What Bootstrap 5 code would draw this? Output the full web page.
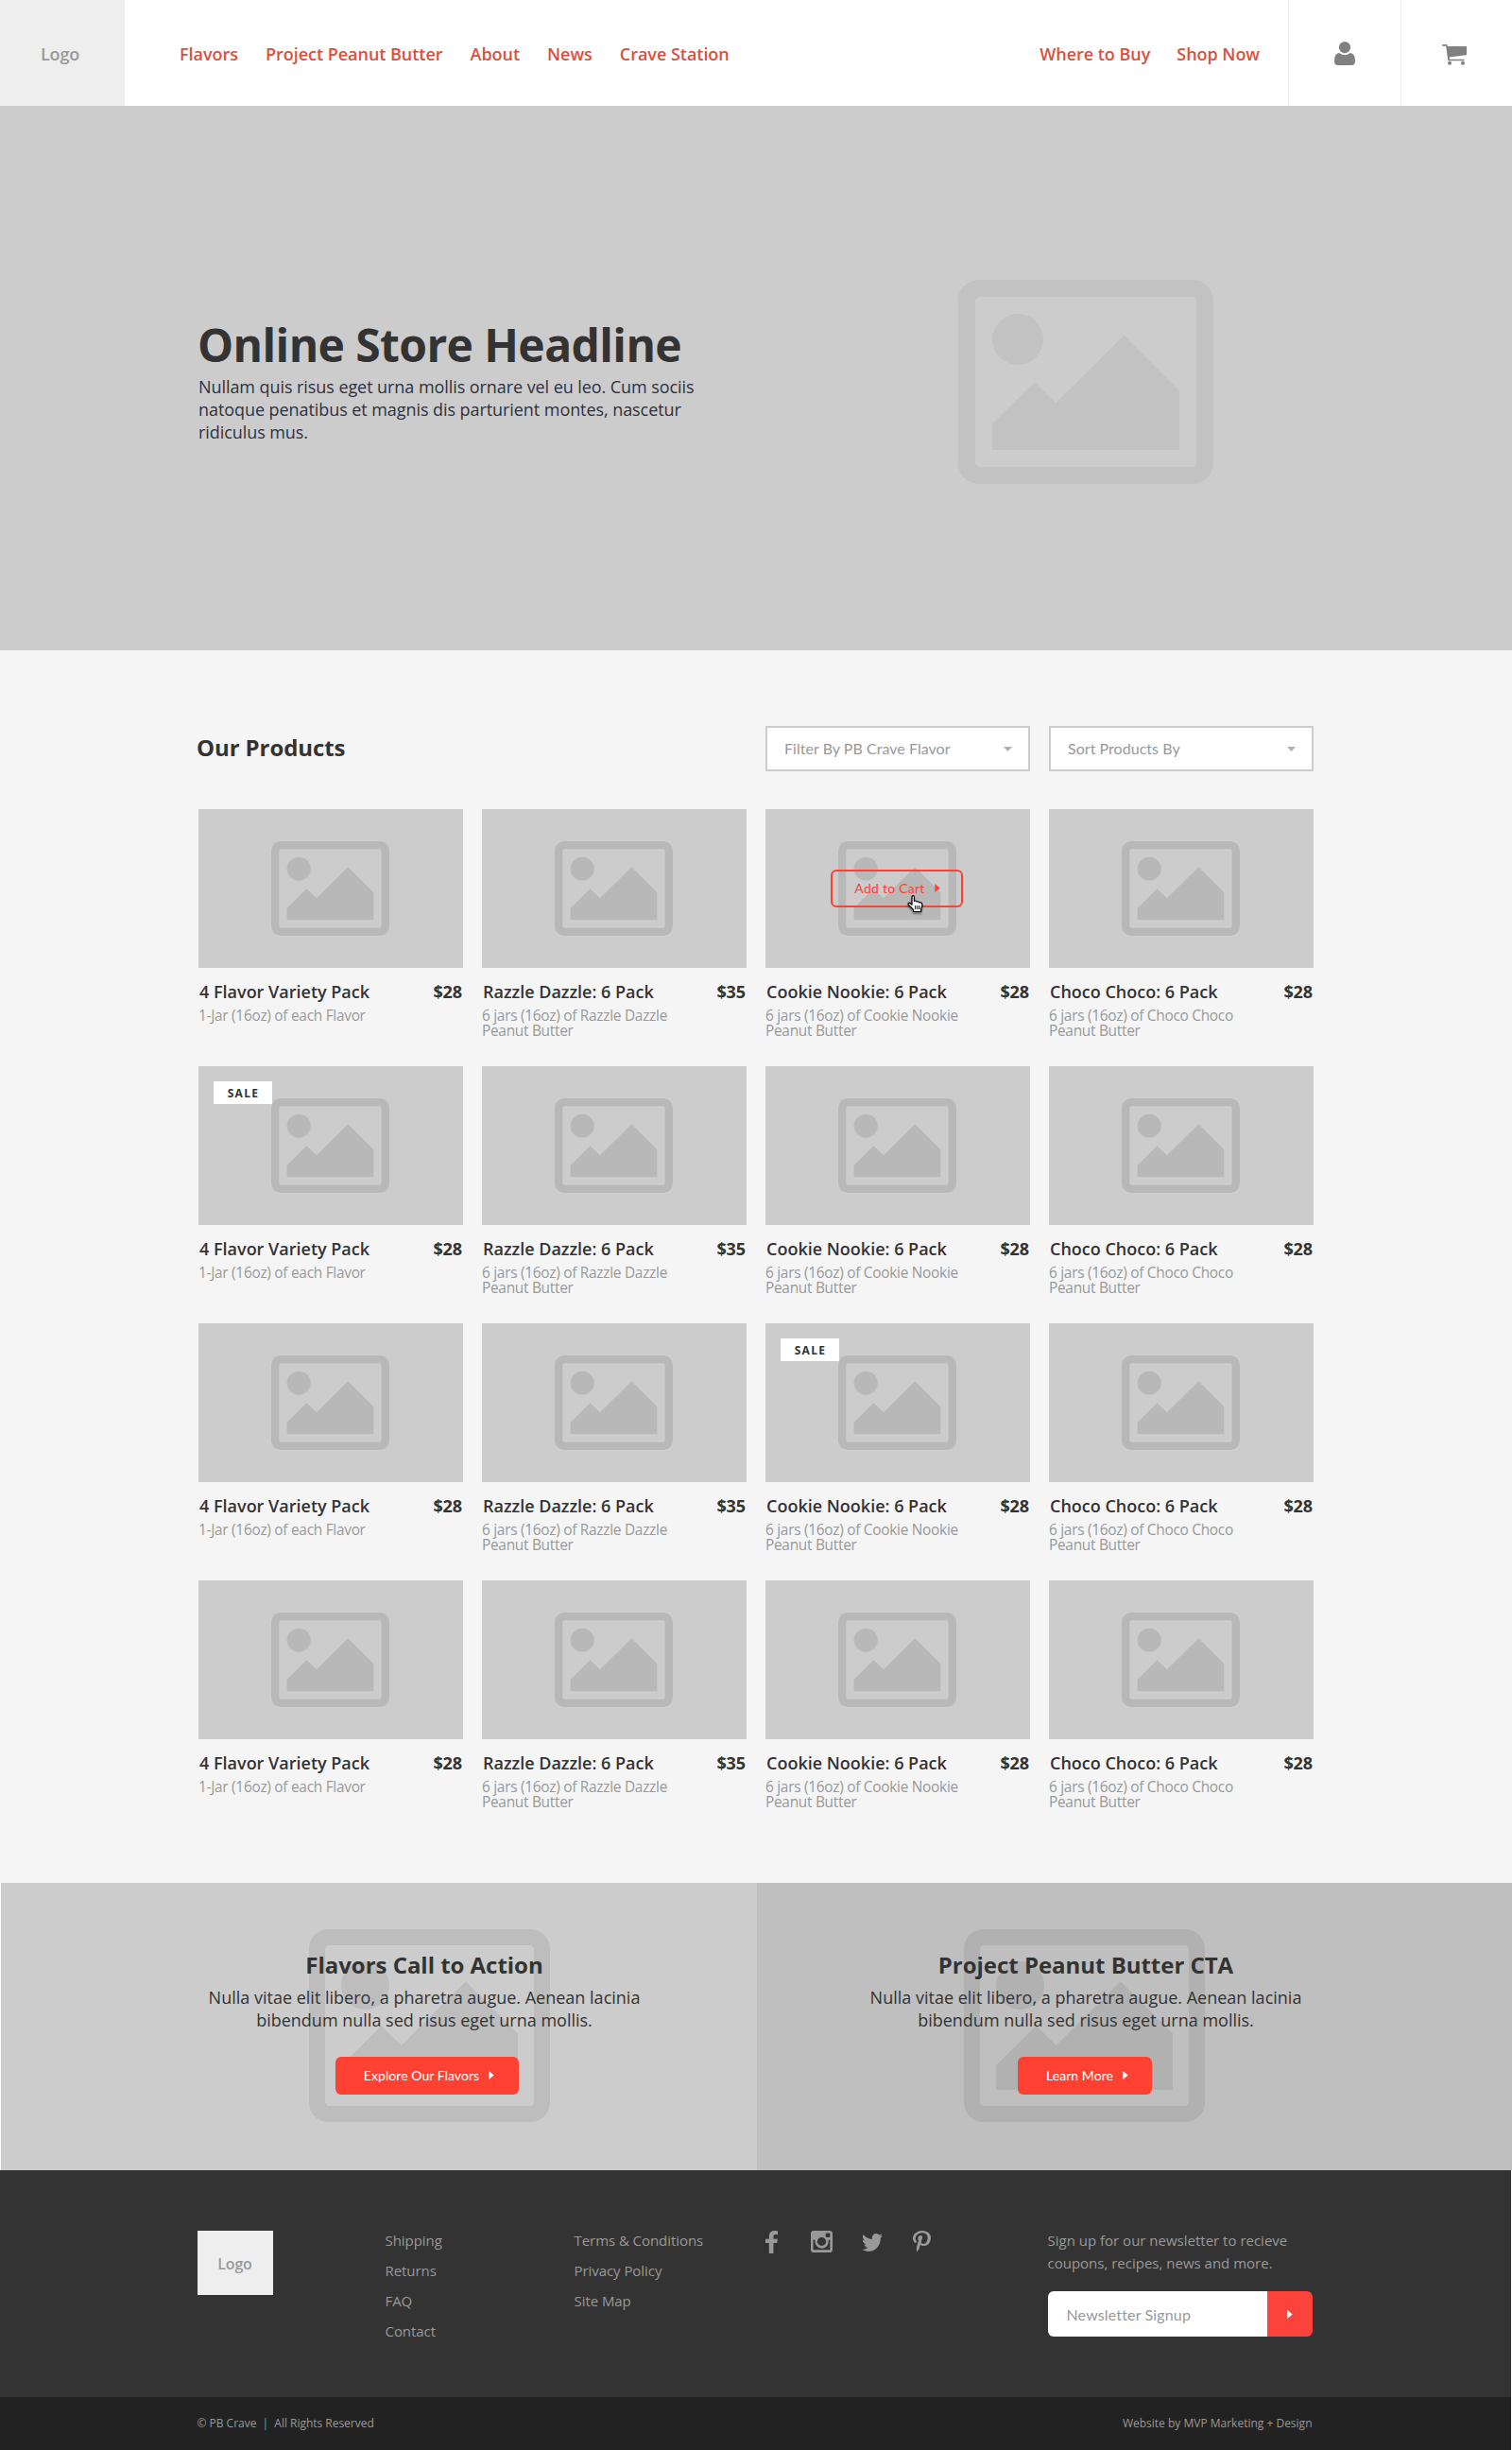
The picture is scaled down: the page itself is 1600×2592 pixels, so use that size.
<!DOCTYPE html>
<html lang="en">
<head>
<meta charset="utf-8">
<meta name="viewport" content="width=device-width, initial-scale=1">
<title>PB Crave – Online Store</title>
<link href="https://cdn.jsdelivr.net/npm/bootstrap@5.3.0/dist/css/bootstrap.min.css" rel="stylesheet">
<style>
  body { font-family: "Open Sans", sans-serif; background: #fff; color: #333; font-size: 18px; line-height: 24px; }
  .humanist { font-family: Lato, sans-serif; }
  .wrap { width: 1180px; margin: 0 auto; }
  svg { display: block; flex: none; }

  /* Header */
  .site-nav { height: 112px; padding: 0; font-weight: 600; }
  .site-logo { width: 132px; background: #eee; color: #999; font-weight: 600; letter-spacing: -.2px; padding: 2px 5px 0 0; }
  .site-nav .nav-link { color: #dc4f40; padding: 2px 0 0; letter-spacing: -.03px; }
  .nav-main { gap: 29px; margin-left: 58px; }
  .nav-shop { gap: 28px; margin-right: 30px; }
  .nav-tool { width: 119px; border-left: 1px solid #eee; }
  .nav-tool + .nav-tool { width: 118px; padding-right: 5px; }

  /* Hero */
  .hero { height: 576px; background: #ccc; }
  .hero-copy { width: 540px; padding-top: 229px; }
  .hero-copy h1 { font-size: 48px; line-height: 48px; font-weight: 700; letter-spacing: -.6px; margin: 0 0 8px -1px; }
  .hero-copy p { color: #2f3140; letter-spacing: -.07px; margin: 0; }
  .hero-art { margin: 184px 106px 0 0; color: #c2c2c2; }

  /* Products */
  .products { background: #f5f5f5; padding: 80px 0 48px; }
  .products-head { height: 48px; margin-bottom: 40px; gap: 20px; }
  .products-head h2 { font-size: 24px; font-weight: 700; letter-spacing: -.1px; margin: 0 auto 2px -2px; }
  .picker { width: 280px; height: 48px; background: #fff; border: 2px solid #ccc; border-radius: 0; padding: 0 17px 0 18px; color: #999; font-size: 16px; letter-spacing: .04px; }
  .product-grid { --bs-gutter-x: 20px; }
  .product { height: 272px; }
  .thumb { height: 168px; background: #ccc; color: #b8b8b8; }
  .thumb-art { margin-right: 1px; }
  .product h3 { font-size: 18px; line-height: 24px; font-weight: 600; margin: 0; }
  .price { font-weight: 700; letter-spacing: -.1px; }
  .product-line { margin: 13px 1px 6px; }
  .product p { font-size: 15.4px; line-height: 16px; color: #999; width: 216px; letter-spacing: -.27px; margin: 0; }
  .sale-flag { position: absolute; left: 16px; top: 16px; width: 62px; height: 24px; background: #fff; color: #333; font-size: 12px; font-weight: 700; letter-spacing: 1.3px; line-height: 25px; padding-left: 1px; text-align: center; }
  .add-btn { position: absolute; left: 69px; top: 64px; width: 140px; height: 40px; border: 2px solid #ff4133; border-radius: 6px; color: #ff4133; font-size: 14px; letter-spacing: .25px; gap: 10px; padding: 0 0 1px 1px; }
  .pointer-hand { position: absolute; left: 150px; top: 91px; filter: drop-shadow(0 2px 1px rgba(0,0,0,.4)); }

  /* Calls to action */
  .cta { height: 304px; padding-top: 71px; text-align: center; }
  .cta-flavors { width: 800px; margin-left: 1px; background: #ccc; color: #bdbdbd; padding-right: 0; padding-left: 96px; }
  .cta-project { width: 799px; background: #bfbfbf; color: #b1b1b1; padding-right: 103px; }
  .cta h2 { color: #333; font-size: 24px; line-height: 32px; font-weight: 700; margin: 0 0 6px; letter-spacing: -.03px; position: relative; }
  .cta p { color: #333; width: 470px; margin: 0 auto 27px; position: relative; }
  .cta-art { position: absolute; top: 49px; }
  .cta-flavors .cta-art { left: 326px; }
  .cta-project .cta-art { left: 219px; }
  .cta .btn { height: 40px; padding: 0 0 1px; border: 0; border-radius: 6px; background: #ff4133; color: #fff; font-size: 14px; gap: 10px; position: relative; letter-spacing: .06px; }
  .cta-flavors .btn { width: 194px; margin-left: 6px; padding-left: 4px; }
  .cta-project .btn { width: 142px; margin-right: 2px; padding-left: 5px; }

  /* Footer */
  .site-footer { width: 1599px; height: 240px; background: #333; color: #999; font-size: 15px; padding-top: 58px; }
  .footer-logo { width: 80px; height: 68px; background: #eee; font-weight: 600; font-size: 16px; letter-spacing: -.2px; margin: 6px 119px 0 -1px; padding-top: 1px; }
  .footer-links { line-height: 32px; letter-spacing: -.06px; }
  .links-help { width: 200px; }
  .links-legal { width: 202px; }
  .social { margin-top: 6px; }
  .social .ico-instagram { margin-left: 35px; }
  .social .ico-twitter { margin: 3px 32px 0 31px; }
  .signup { width: 280px; margin: 4px 1px 0 auto; }
  .signup p { margin-bottom: 18px; }
  .signup .form-control { height: 48px; border: 0; border-radius: 6px 0 0 6px; padding: 0 20px; font-size: 16px; letter-spacing: .15px; }
  .signup .form-control::placeholder { color: #999; opacity: 1; }
  .signup .btn { width: 48px; background: #fb423b; color: #fff; border: 0; border-radius: 0 6px 6px 0; padding: 0; }
  .legal { width: 1599px; height: 56px; background: #222; color: #999; font-size: 12px; }
  .legal .wrap { padding-right: 1px; }
  .legal-owner { margin-left: -1px; letter-spacing: -.02px; }
</style>
<script src="https://cdn.jsdelivr.net/npm/bootstrap@5.3.0/dist/js/bootstrap.bundle.min.js"></script>
</head>
<body>

<svg width="0" height="0" class="position-absolute" aria-hidden="true">
  <symbol id="picture" viewBox="0 0 270 216">
    <path fill="currentColor" fill-rule="evenodd" d="M22 0H248a22 22 0 0 1 22 22V194a22 22 0 0 1-22 22H22a22 22 0 0 1-22-22V22A22 22 0 0 1 22 0ZM22.500 18a4.500 4.500 0 0 0-4.500 4.500V193.500a4.500 4.500 0 0 0 4.500 4.500H247.500a4.500 4.500 0 0 0 4.500-4.500V22.500a4.500 4.500 0 0 0-4.500-4.500Z"/>
    <circle fill="currentColor" cx="63" cy="63" r="27"/>
    <path fill="currentColor" d="M36 152.700 81 108.300 103.500 130.300 175.500 58.600 234 117V180H36Z"/>
  </symbol>
  <symbol id="arrow-right" viewBox="0 0 6 9"><path fill="currentColor" d="M.3 0 5.700 4.500 .3 9Z"/></symbol>
  <symbol id="arrow-down" viewBox="0 0 9 5"><path fill="#b0b0b0" d="M0 0H9L4.500 5Z"/></symbol>
</svg>

<nav class="site-nav navbar-expand d-flex bg-white">
  <a class="site-logo d-flex align-items-center justify-content-center text-decoration-none" href="#">Logo</a>
  <ul class="navbar-nav nav-main align-items-center">
    <li class="nav-item"><a class="nav-link" href="#">Flavors</a></li>
    <li class="nav-item"><a class="nav-link" href="#">Project Peanut Butter</a></li>
    <li class="nav-item"><a class="nav-link" href="#">About</a></li>
    <li class="nav-item"><a class="nav-link" href="#">News</a></li>
    <li class="nav-item"><a class="nav-link" href="#">Crave Station</a></li>
  </ul>
  <ul class="navbar-nav nav-shop align-items-center ms-auto">
    <li class="nav-item"><a class="nav-link" href="#">Where to Buy</a></li>
    <li class="nav-item"><a class="nav-link" href="#">Shop Now</a></li>
  </ul>
  <a class="nav-tool d-flex align-items-center justify-content-center" href="#" aria-label="Account">
    <svg width="22" height="25" viewBox="0 0 22 25" fill="#808080"><circle cx="11" cy="6.100" r="6.100"/><path d="M5.200 12Q8 14.200 11 14.200T16.800 12Q22 12.500 22 20.500 22 25 18 25H4Q0 25 0 20.500 0 12.500 5.200 12Z"/></svg>
  </a>
  <a class="nav-tool d-flex align-items-center justify-content-center" href="#" aria-label="Cart">
    <svg class="mt-1" width="26" height="22" viewBox="0 0 26 22" fill="#808080"><path d="M.7 0H5Q5.700 0 5.900 2H25.300Q26 2 26 2.700V10.500Q26 11.200 25.300 11.300L7.800 13.600 8 15.700H23Q23.700 15.700 23.700 16.500T23 17.300H7Q6.300 17.300 6.200 16.500L4.200 1.700H.7Q0 1.700 0 .85T.7 0Z"/><circle cx="8" cy="19.800" r="2"/><circle cx="22" cy="19.800" r="2"/></svg>
  </a>
</nav>

<header class="hero">
  <div class="wrap d-flex justify-content-between">
    <div class="hero-copy">
      <h1>Online Store Headline</h1>
      <p>Nullam quis risus eget urna mollis ornare vel eu leo. Cum sociis natoque penatibus et magnis dis parturient montes, nascetur ridiculus mus.</p>
    </div>
    <svg class="hero-art" width="270" height="216"><use href="#picture"/></svg>
  </div>
</header>

<main class="products">
  <div class="wrap">
    <div class="products-head d-flex align-items-center">
      <h2>Our Products</h2>
      <button class="picker humanist d-flex align-items-center justify-content-between">Filter By PB Crave Flavor <svg width="9" height="5"><use href="#arrow-down"/></svg></button>
      <button class="picker humanist d-flex align-items-center justify-content-between">Sort Products By <svg width="9" height="5"><use href="#arrow-down"/></svg></button>
    </div>

    <div class="row product-grid">
      <article class="col-3 product">
        <div class="thumb d-flex align-items-center justify-content-center"><svg class="thumb-art" width="125" height="100"><use href="#picture"/></svg></div>
        <div class="product-line d-flex justify-content-between"><h3>4 Flavor Variety Pack</h3><span class="price">$28</span></div>
        <p>1-Jar (16oz) of each Flavor</p>
      </article>
      <article class="col-3 product">
        <div class="thumb d-flex align-items-center justify-content-center"><svg class="thumb-art" width="125" height="100"><use href="#picture"/></svg></div>
        <div class="product-line d-flex justify-content-between"><h3>Razzle Dazzle: 6 Pack</h3><span class="price">$35</span></div>
        <p>6 jars (16oz) of Razzle Dazzle Peanut Butter</p>
      </article>
      <article class="col-3 product">
        <div class="thumb position-relative d-flex align-items-center justify-content-center"><svg class="thumb-art" width="125" height="100"><use href="#picture"/></svg>
          <button class="add-btn humanist btn d-flex align-items-center justify-content-center">Add to Cart <svg width="6" height="9"><use href="#arrow-right"/></svg></button>
          <svg class="pointer-hand" width="18" height="19" viewBox="0 0 18 19"><path d="M5 2Q5 .7 6.200 .7T7.400 2V6.300Q9.400 5.400 10 7 12 6.200 12.600 7.800 15 7.200 15.700 9.300 16.500 11.500 14.700 14.500V17.500H6.600V15.500L1.300 10.300Q.3 8.300 2.600 8L5 10.200Z" fill="#fff" stroke="#000" stroke-width="1.200" stroke-linejoin="round"/><path d="M8.700 11V15M10.900 11V15M13 11V15" stroke="#000" stroke-width="1"/></svg>
        </div>
        <div class="product-line d-flex justify-content-between"><h3>Cookie Nookie: 6 Pack</h3><span class="price">$28</span></div>
        <p>6 jars (16oz) of Cookie Nookie Peanut Butter</p>
      </article>
      <article class="col-3 product">
        <div class="thumb d-flex align-items-center justify-content-center"><svg class="thumb-art" width="125" height="100"><use href="#picture"/></svg></div>
        <div class="product-line d-flex justify-content-between"><h3>Choco Choco: 6 Pack</h3><span class="price">$28</span></div>
        <p>6 jars (16oz) of Choco Choco Peanut Butter</p>
      </article>

      <article class="col-3 product">
        <div class="thumb position-relative d-flex align-items-center justify-content-center"><svg class="thumb-art" width="125" height="100"><use href="#picture"/></svg><span class="sale-flag">SALE</span></div>
        <div class="product-line d-flex justify-content-between"><h3>4 Flavor Variety Pack</h3><span class="price">$28</span></div>
        <p>1-Jar (16oz) of each Flavor</p>
      </article>
      <article class="col-3 product">
        <div class="thumb d-flex align-items-center justify-content-center"><svg class="thumb-art" width="125" height="100"><use href="#picture"/></svg></div>
        <div class="product-line d-flex justify-content-between"><h3>Razzle Dazzle: 6 Pack</h3><span class="price">$35</span></div>
        <p>6 jars (16oz) of Razzle Dazzle Peanut Butter</p>
      </article>
      <article class="col-3 product">
        <div class="thumb d-flex align-items-center justify-content-center"><svg class="thumb-art" width="125" height="100"><use href="#picture"/></svg></div>
        <div class="product-line d-flex justify-content-between"><h3>Cookie Nookie: 6 Pack</h3><span class="price">$28</span></div>
        <p>6 jars (16oz) of Cookie Nookie Peanut Butter</p>
      </article>
      <article class="col-3 product">
        <div class="thumb d-flex align-items-center justify-content-center"><svg class="thumb-art" width="125" height="100"><use href="#picture"/></svg></div>
        <div class="product-line d-flex justify-content-between"><h3>Choco Choco: 6 Pack</h3><span class="price">$28</span></div>
        <p>6 jars (16oz) of Choco Choco Peanut Butter</p>
      </article>

      <article class="col-3 product">
        <div class="thumb d-flex align-items-center justify-content-center"><svg class="thumb-art" width="125" height="100"><use href="#picture"/></svg></div>
        <div class="product-line d-flex justify-content-between"><h3>4 Flavor Variety Pack</h3><span class="price">$28</span></div>
        <p>1-Jar (16oz) of each Flavor</p>
      </article>
      <article class="col-3 product">
        <div class="thumb d-flex align-items-center justify-content-center"><svg class="thumb-art" width="125" height="100"><use href="#picture"/></svg></div>
        <div class="product-line d-flex justify-content-between"><h3>Razzle Dazzle: 6 Pack</h3><span class="price">$35</span></div>
        <p>6 jars (16oz) of Razzle Dazzle Peanut Butter</p>
      </article>
      <article class="col-3 product">
        <div class="thumb position-relative d-flex align-items-center justify-content-center"><svg class="thumb-art" width="125" height="100"><use href="#picture"/></svg><span class="sale-flag">SALE</span></div>
        <div class="product-line d-flex justify-content-between"><h3>Cookie Nookie: 6 Pack</h3><span class="price">$28</span></div>
        <p>6 jars (16oz) of Cookie Nookie Peanut Butter</p>
      </article>
      <article class="col-3 product">
        <div class="thumb d-flex align-items-center justify-content-center"><svg class="thumb-art" width="125" height="100"><use href="#picture"/></svg></div>
        <div class="product-line d-flex justify-content-between"><h3>Choco Choco: 6 Pack</h3><span class="price">$28</span></div>
        <p>6 jars (16oz) of Choco Choco Peanut Butter</p>
      </article>

      <article class="col-3 product">
        <div class="thumb d-flex align-items-center justify-content-center"><svg class="thumb-art" width="125" height="100"><use href="#picture"/></svg></div>
        <div class="product-line d-flex justify-content-between"><h3>4 Flavor Variety Pack</h3><span class="price">$28</span></div>
        <p>1-Jar (16oz) of each Flavor</p>
      </article>
      <article class="col-3 product">
        <div class="thumb d-flex align-items-center justify-content-center"><svg class="thumb-art" width="125" height="100"><use href="#picture"/></svg></div>
        <div class="product-line d-flex justify-content-between"><h3>Razzle Dazzle: 6 Pack</h3><span class="price">$35</span></div>
        <p>6 jars (16oz) of Razzle Dazzle Peanut Butter</p>
      </article>
      <article class="col-3 product">
        <div class="thumb d-flex align-items-center justify-content-center"><svg class="thumb-art" width="125" height="100"><use href="#picture"/></svg></div>
        <div class="product-line d-flex justify-content-between"><h3>Cookie Nookie: 6 Pack</h3><span class="price">$28</span></div>
        <p>6 jars (16oz) of Cookie Nookie Peanut Butter</p>
      </article>
      <article class="col-3 product">
        <div class="thumb d-flex align-items-center justify-content-center"><svg class="thumb-art" width="125" height="100"><use href="#picture"/></svg></div>
        <div class="product-line d-flex justify-content-between"><h3>Choco Choco: 6 Pack</h3><span class="price">$28</span></div>
        <p>6 jars (16oz) of Choco Choco Peanut Butter</p>
      </article>
    </div>
  </div>
</main>

<section class="d-flex">
  <div class="cta cta-flavors position-relative">
    <svg class="cta-art" width="255" height="204"><use href="#picture"/></svg>
    <h2>Flavors Call to Action</h2>
    <p>Nulla vitae elit libero, a pharetra augue. Aenean lacinia bibendum nulla sed risus eget urna mollis.</p>
    <a class="btn humanist d-inline-flex align-items-center justify-content-center" href="#">Explore Our Flavors <svg width="6" height="9"><use href="#arrow-right"/></svg></a>
  </div>
  <div class="cta cta-project position-relative">
    <svg class="cta-art" width="255" height="204"><use href="#picture"/></svg>
    <h2>Project Peanut Butter CTA</h2>
    <p>Nulla vitae elit libero, a pharetra augue. Aenean lacinia bibendum nulla sed risus eget urna mollis.</p>
    <a class="btn humanist d-inline-flex align-items-center justify-content-center" href="#">Learn More <svg width="6" height="9"><use href="#arrow-right"/></svg></a>
  </div>
</section>

<footer>
  <div class="site-footer">
    <div class="wrap d-flex align-items-start">
      <div class="footer-logo d-flex align-items-center justify-content-center">Logo</div>
      <ul class="footer-links links-help list-unstyled mb-0">
        <li>Shipping</li><li>Returns</li><li>FAQ</li><li>Contact</li>
      </ul>
      <ul class="footer-links links-legal list-unstyled mb-0">
        <li>Terms &amp; Conditions</li><li>Privacy Policy</li><li>Site Map</li>
      </ul>
      <div class="social d-flex align-items-start">
        <svg width="13" height="24" viewBox="479 0 864 1664" preserveAspectRatio="none" fill="#999"><path d="M1343 12v264h-157q-86 0-116 36t-30 108v189h293l-39 296h-254v759h-306v-759h-255v-296h255v-218q0-186 104-288.500t277-102.500q147 0 228 12z"/></svg>
        <svg class="ico-instagram" width="23" height="23" viewBox="128 128 1536 1536" fill="#999"><path d="M1490 1426v-648h-135q20 63 20 131 0 126-64 232.500t-174 168.500-240 62q-197 0-337-135.500t-140-327.500q0-68 20-131h-141v648q0 26 17.500 43.500t43.500 17.500h1069q25 0 43-17.500t18-43.500zm-284-533q0-124-90.500-211.500t-218.500-87.500q-127 0-217.500 87.500t-90.500 211.500 90.500 211.500 217.500 87.500q128 0 218.500-87.500t90.500-211.500zm284-360v-165q0-28-20-48.500t-49-20.500h-174q-29 0-49 20.500t-20 48.500v165q0 29 20 49t49 20h174q29 0 49-20t20-49zm174-208v1142q0 81-58 139t-139 58h-1142q-81 0-139-58t-58-139v-1142q0-81 58-139t139-58h1142q81 0 139 58t58 139z"/></svg>
        <svg class="ico-twitter" width="22" height="19" viewBox="108 256 1576 1280" preserveAspectRatio="none" fill="#999"><path d="M1684 408q-67 98-162 167 1 14 1 42 0 130-38 259.500t-115.500 248.500-184.500 210.500-258 146-323 54.500q-271 0-496-145 35 4 78 4 225 0 401-138-105-2-188-64.500t-114-159.500q33 5 61 5 43 0 85-11-112-23-185.500-111.500t-73.500-205.500v-4q68 38 146 41-66-44-105-115t-39-154q0-88 44-163 121 149 294.500 238.500t371.500 99.500q-8-38-8-74 0-134 94.500-228.500t228.500-94.500q140 0 236 102 109-21 205-78-37 115-142 178 93-10 186-50z"/></svg>
        <svg width="19" height="24" viewBox="256 0 1280 1792" preserveAspectRatio="none" fill="#999"><path d="M256 597q0-108 37.500-203.500t103.500-166.500 152-123 185-78 202-26q158 0 294 66.500t221 193.500 85 287q0 96-19 188t-60 177-100 149.500-145 103-189 38.500q-68 0-135-32t-96-88q-10 39-28 112.500t-23.500 95-20.500 71-26 71-32 62.500-46 77.500-62 86.500l-14 5-9-10q-15-157-15-188 0-92 21.500-206.500t66.500-287.500 52-203q-32-65-32-169 0-83 52-156t132-73q61 0 95 40.500t34 102.500q0 66-44 191t-44 187q0 63 45 104.500t109 41.500q55 0 102-25t78.500-68 56-95 38-110.500 20-111 6.500-99.500q0-173-109.500-269.500t-285.500-96.500q-200 0-334 129.500t-134 328.500q0 44 12.500 85t27 65 27 45.500 12.500 30.500q0 28-15 73t-37 45q-2 0-17-3-51-15-90.500-56t-61-94.500-32.500-108-11-106.500z"/></svg>
      </div>
      <form class="signup">
        <p>Sign up for our newsletter to recieve coupons, recipes, news and more.</p>
        <div class="input-group">
          <input class="form-control humanist" type="email" placeholder="Newsletter Signup">
          <button class="btn d-flex align-items-center justify-content-center" type="button" aria-label="Sign up"><svg width="6" height="9"><use href="#arrow-right"/></svg></button>
        </div>
      </form>
    </div>
  </div>
  <div class="legal">
    <div class="wrap h-100 d-flex align-items-center justify-content-between">
      <span class="legal-owner">© PB Crave &nbsp;|&nbsp; All Rights Reserved</span>
      <span>Website by MVP Marketing + Design</span>
    </div>
  </div>
</footer>
</body>
</html>
